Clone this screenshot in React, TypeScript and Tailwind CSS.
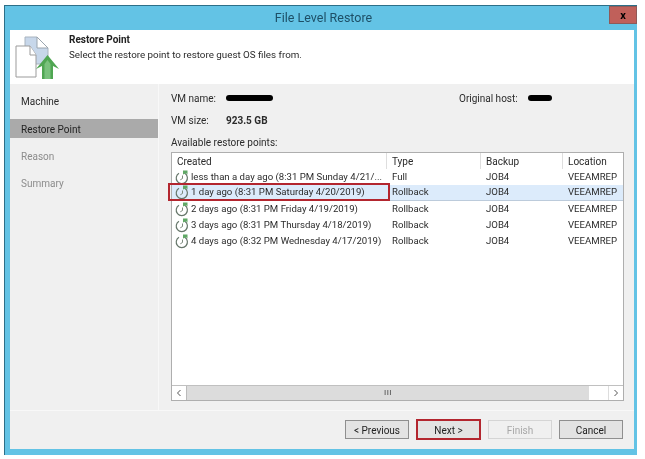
const rows = [
  { created: "less than a day ago (8:31 PM Sunday 4/21/...", type: "Full" },
  { created: "1 day ago (8:31 PM Saturday 4/20/2019)", type: "Rollback", selected: true },
  { created: "2 days ago (8:31 PM Friday 4/19/2019)", type: "Rollback" },
  { created: "3 days ago (8:31 PM Thursday 4/18/2019)", type: "Rollback" },
  { created: "4 days ago (8:32 PM Wednesday 4/17/2019)", type: "Rollback" },
];

function ClockIcon() {
  return (
    <svg width="15" height="15" viewBox="0 0 15 15" fill="none" className="shrink-0">
      <path d="M9.8 3.3A5.6 5.6 0 1 1 4 3.2" stroke="#66766a" strokeWidth="1.2" />
      <path d="M7.5 5.5v3l-2.2 1.3" stroke="#7c8a7d" strokeWidth="1" />
      <path d="M8 0.5h4.5v4l-1.4-1.3-3.1 1.3z" fill="#5fa865" />
    </svg>
  );
}

function HeaderIcon() {
  return (
    <svg width="48" height="46" viewBox="0 0 48 46" fill="none">
      <path d="M11 3h12l11 11v16H11z" fill="#c7d7ea" stroke="#a9b4bf" />
      <path d="M23 3v11h11z" fill="#fff" stroke="#9aa5af" />
      <path d="M2 12h14l6 9v22H2z" fill="#fff" stroke="#9b9b9b" />
      <path d="M16 12v9h6" fill="#fff" stroke="#9b9b9b" />
      <path d="M33.5 21L45 35l-6-3v13H28V32l-6 3z" fill="#4fa652" />
      <path d="M33.5 26l3 4v15h-6V30z" fill="#79c17c" />
    </svg>
  );
}

function Redacted({ className }: { className: string }) {
  return <span className={`inline-block bg-black rounded-sm ${className}`} />;
}

function HeaderCell({ label, className }: { label: string; className: string }) {
  return (
    <div className={`h-full flex items-center pl-[5px] border-r border-[#dedede] ${className}`}>{label}</div>
  );
}

function WizardButton({ label, className = "" }: { label: string; className?: string }) {
  return (
    <button className={`h-[19px] w-[64px] border border-[#8f8f8f] bg-[#e3e3e3] text-[#222] text-[10px] pt-[1px] ${className}`}>
      {label}
    </button>
  );
}

export default function App() {
  return (
    <div className="w-[645px] h-[459px] bg-white pt-[5px] pl-[4px] font-['Roboto',sans-serif] text-[10px] text-[#2b2b2b] overflow-hidden blur-[0.35px]">
      <div className="relative w-[633px] h-[450px] bg-[#63c3e5] border-l border-t border-[#2d6f88] flex flex-col pl-[5px] pr-[3px] pb-[6px]">
        <div className="h-[24px] shrink-0 flex items-center justify-center pl-[3px] text-[12.5px] text-[#1d4f66]">File Level Restore</div>
        <div className="absolute top-0 right-0 w-[28px] h-[18px] bg-[#c0605a] border border-[#8f5a58] flex items-center justify-center text-[11px] font-bold text-black leading-none">
          x
        </div>

        <div className="flex-1 flex flex-col bg-[#f0f0f0] min-h-0">
          <div className="h-[54px] shrink-0 bg-white flex">
            <div className="w-[59px] pl-[4px] pt-[4px] shrink-0">
              <HeaderIcon />
            </div>
            <div className="pt-[2px] text-[9.8px]">
              <div className="font-bold text-[#222] leading-[15px] text-[10px]">Restore Point</div>
              <div className="leading-[15px]">Select the restore point to restore guest OS files from.</div>
            </div>
          </div>

          <div className="flex-1 flex min-h-0 border-b border-[#f8f8f8]">
            <div className="w-[149px] shrink-0 pt-[4px] border-r border-[#f8f8f8]">
              <div className="h-[27px] flex items-center pl-[11px] mb-[4px]">Machine</div>
              <div className="h-[19px] flex items-center pl-[11px] pt-[1px] bg-[#aaaaaa] text-[#222] mb-[5px]">Restore Point</div>
              <div className="h-[27px] flex items-center pl-[11px] text-[#8c8c8c]">Reason</div>
              <div className="h-[27px] flex items-center pl-[11px] text-[#8c8c8c]">Summary</div>
            </div>

            <div className="flex-1 min-w-0 pl-[12px] pt-[3px] flex flex-col">
              <div className="h-[22px] flex items-center">
                <span className="w-[55px]">VM name:</span>
                <Redacted className="w-[47px] h-[6px]" />
                <span className="ml-[186px] w-[69px]">Original host:</span>
                <Redacted className="w-[24px] h-[6px]" />
              </div>
              <div className="h-[23px] flex items-center">
                <span className="w-[55px]">VM size:</span>
                <span className="font-bold">923.5 GB</span>
              </div>
              <div className="h-[20px] flex items-center">Available restore points:</div>

              <div className="h-[249px] w-[453px] bg-white border border-[#aeaeae] flex flex-col">
                <div className="h-[16px] shrink-0 flex">
                  <HeaderCell label="Created" className="w-[215px]" />
                  <HeaderCell label="Type" className="w-[94px]" />
                  <HeaderCell label="Backup" className="w-[82px]" />
                  <div className="h-full flex items-center pl-[5px]">Location</div>
                </div>
                <div className="flex-1 flex flex-col text-[9.6px]">
                  {rows.map((r) => (
                    <div
                      key={r.created}
                      className={`h-[16px] flex items-center ${r.selected ? "bg-[#dcebfb] border-b border-[#bccbdb] relative" : ""}`}
                    >
                      <div className="w-[215px] pl-[3px] flex items-center gap-[1px] whitespace-nowrap">
                        <ClockIcon />
                        {r.created}
                      </div>
                      <div className="w-[94px] pl-[5px]">{r.type}</div>
                      <div className="w-[82px] pl-[5px]">JOB4</div>
                      <div className="pl-[5px]">VEEAMREP</div>
                      {r.selected && (
                        <div className="absolute left-[-4px] top-[-2px] w-[222px] h-[18px] border-2 border-[#b3262f]" />
                      )}
                    </div>
                  ))}
                </div>
                <div className="h-[15px] shrink-0 flex items-center bg-[#dcdcdc] border-t border-[#c0c0c0]">
                  <div className="w-[15px] h-full bg-white flex items-center justify-center border-r border-[#bbb]">
                    <svg width="6" height="8" viewBox="0 0 6 8" fill="none">
                      <path d="M4.5 1L1.5 4l3 3" stroke="#555" />
                    </svg>
                  </div>
                  <div className="flex-1 flex justify-center text-[8px] text-[#444] tracking-[0.5px]">III</div>
                  <div className="w-[19px] h-full bg-white" />
                  <div className="w-[15px] h-full bg-white flex items-center justify-center border-l border-[#ddd]">
                    <svg width="6" height="8" viewBox="0 0 6 8" fill="none">
                      <path d="M1.5 1l3 3-3 3" stroke="#555" />
                    </svg>
                  </div>
                </div>
              </div>
            </div>
          </div>

          <div className="h-[38px] shrink-0 flex items-start justify-end pr-[11px] pt-[8px]">
            <div className="h-[21px] flex items-center">
              <WizardButton label="< Previous" />
              <WizardButton label="Next >" className="ml-[7px] border-2 !border-[#b3262f] w-[65px] !h-[21px]" />
              <WizardButton label="Finish" className="ml-[7px] !bg-[#f0f0f0] !border-[#d5d5d5] !text-[#a8a8a8]" />
              <WizardButton label="Cancel" className="ml-[7px]" />
            </div>
          </div>
        </div>
      </div>
    </div>
  );
}
